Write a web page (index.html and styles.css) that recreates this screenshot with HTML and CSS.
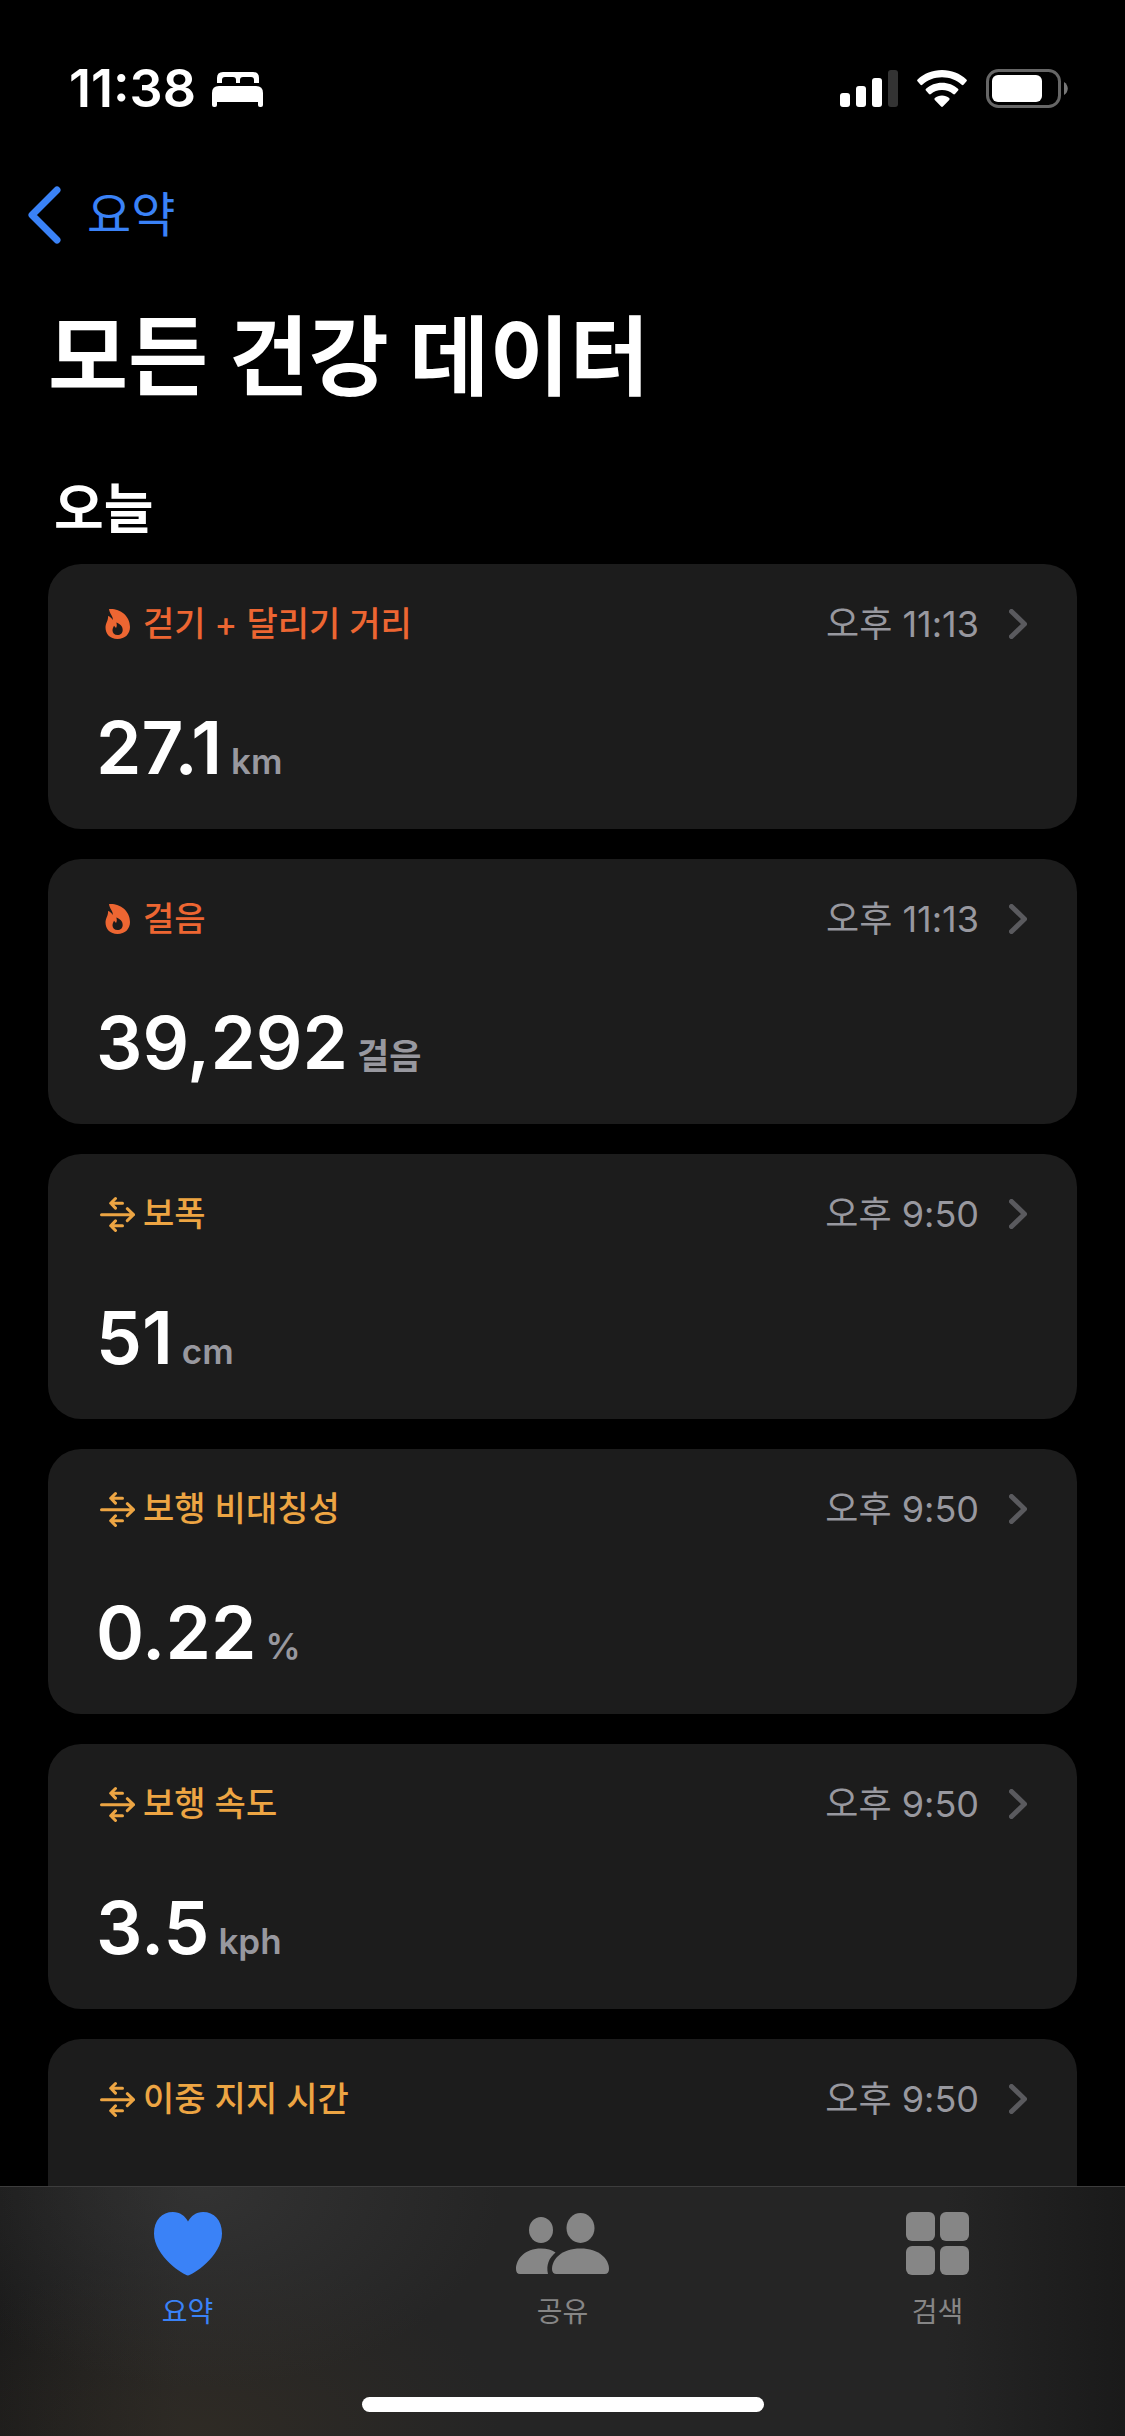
FILE: index.html
```
<!DOCTYPE html>
<html lang="ko">
<head>
    <meta charset="UTF-8">
    <meta name="viewport" content="width=device-width, initial-scale=1.0">
    <title>모든 건강 데이터</title>
    <link rel="stylesheet" href="styles.css">
</head>
<body>
    <!-- shared icons -->
    <svg class="sprite" aria-hidden="true">
        <symbol id="flame" viewBox="0 0 36 36">
            <path fill="currentColor" fill-rule="evenodd" d="M9 3C19 2 30 9 30 21C30 28 25 33 17.500 33C10 33 5.500 28 5.500 21.500C5.500 17 8.500 14.500 8 10C10 10.500 11.500 12 12.700 14C13.500 10.500 9.500 8 9 3ZM16.300 16.500C20 18 22.700 20 22.700 24C22.700 27 20.500 29 17.500 29C14.500 29 12.500 27 12.500 24.500C12.500 22.500 13.500 21 14 19.800L16 22C17 20.500 17 18.500 16.300 16.500Z"/>
        </symbol>
        <symbol id="mobility" viewBox="0 0 36 36">
            <path fill="none" stroke="currentColor" stroke-width="3" stroke-linecap="round" stroke-linejoin="round" d="M1.500 18.700H33.500M27.300 12.700L33.500 18.700L27.300 24.700M22.500 7.300H11M15.500 2.500L10.700 7.300L15.500 12.100M22.500 29.700H11M15.500 24.900L10.700 29.700L15.500 34.500"/>
        </symbol>
        <symbol id="chevron" viewBox="0 0 18 30">
            <path fill="none" stroke="currentColor" stroke-width="5" stroke-linecap="round" stroke-linejoin="round" d="M2.500 2.500L15.500 15L2.500 27.500"/>
        </symbol>
    </svg>

    <div class="app">
        <header class="status-bar">
            <div class="status-left">
                <span class="clock">11:38</span>
                <svg width="52" height="36" viewBox="0 0 52 36" fill="#fff">
                    <path d="M5 12V7Q5 1 11 1H41Q47 1 47 7V12H42V9Q42 6 39 6H31Q28 6 28 9V12H24V9Q24 6 21 6H13Q10 6 10 9V12Z"/>
                    <path d="M0 22Q0 15 7 15H44Q51 15 51 22V34Q51 36 49 36H48Q46 36 46 34V31H5V34Q5 36 3 36H2Q0 36 0 34Z"/>
                </svg>
            </div>
            <div class="status-right">
                <svg width="58" height="38" viewBox="0 0 58 38" fill="#fff">
                    <rect x="0" y="23" width="10" height="14" rx="3"/>
                    <rect x="16" y="16" width="10" height="21" rx="3"/>
                    <rect x="32" y="8" width="10" height="29" rx="3"/>
                    <rect x="48" y="0" width="10" height="37" rx="3" fill="#333"/>
                </svg>
                <svg width="50" height="38" viewBox="0 0 50 38" fill="#fff">
                    <path d="M25 0C15.500 0 7 3.500 .6 9.500Q-.3 10.400 .5 11.300L3.500 14.800Q4.400 15.700 5.300 14.800C10.500 10 17.500 7.300 25 7.300S39.500 10 44.700 14.800Q45.600 15.700 46.500 14.800L49.500 11.300Q50.300 10.400 49.400 9.500C43 3.500 34.500 0 25 0Z"/>
                    <path d="M25 12.700C18.800 12.700 13.200 15 9 18.700Q8 19.600 8.900 20.600L12 24Q12.900 24.900 13.900 24C16.800 21.500 20.700 20 25 20S33.200 21.500 36.100 24Q37.100 24.900 38 24L41.100 20.600Q42 19.600 41 18.700C36.800 15 31.200 12.700 25 12.700Z"/>
                    <path d="M25 25.500C22.200 25.500 19.700 26.500 17.800 28.100Q16.900 29 17.800 29.900L24.100 36.500Q25 37.400 25.900 36.500L32.200 29.900Q33.100 29 32.200 28.100C30.300 26.500 27.800 25.500 25 25.500Z"/>
                </svg>
                <svg width="82" height="40" viewBox="0 0 82 40">
                    <rect x="1.500" y="1.500" width="72" height="36" rx="11" fill="none" stroke="#666" stroke-width="3"/>
                    <rect x="6" y="6" width="50" height="27" rx="6" fill="#fff"/>
                    <path d="M78 13C83 16 83 23 78 26Z" fill="#777"/>
                </svg>
            </div>
        </header>

        <nav class="nav-bar">
            <a href="#" class="back">
                <svg width="34" height="58" viewBox="0 0 34 58">
                    <path fill="none" stroke="currentColor" stroke-width="7" stroke-linecap="round" stroke-linejoin="round" d="M29 4L4 29L29 54"/>
                </svg>
                <span>요약</span>
            </a>
        </nav>

        <main class="content">
            <h1>모든 건강 데이터</h1>
            <h2>오늘</h2>

            <div class="cards">
                <a href="#" class="card activity">
                    <div class="card-head">
                        <svg class="icon"><use href="#flame"/></svg>
                        <h3>걷기 + 달리기 거리</h3>
                        <time>오후 11:13</time>
                        <svg class="arrow"><use href="#chevron"/></svg>
                    </div>
                    <div class="value"><strong>27.1</strong><span>km</span></div>
                </a>
                <a href="#" class="card activity">
                    <div class="card-head">
                        <svg class="icon"><use href="#flame"/></svg>
                        <h3>걸음</h3>
                        <time>오후 11:13</time>
                        <svg class="arrow"><use href="#chevron"/></svg>
                    </div>
                    <div class="value"><strong>39,292</strong><span>걸음</span></div>
                </a>
                <a href="#" class="card mobility">
                    <div class="card-head">
                        <svg class="icon"><use href="#mobility"/></svg>
                        <h3>보폭</h3>
                        <time>오후 9:50</time>
                        <svg class="arrow"><use href="#chevron"/></svg>
                    </div>
                    <div class="value"><strong>51</strong><span>cm</span></div>
                </a>
                <a href="#" class="card mobility">
                    <div class="card-head">
                        <svg class="icon"><use href="#mobility"/></svg>
                        <h3>보행 비대칭성</h3>
                        <time>오후 9:50</time>
                        <svg class="arrow"><use href="#chevron"/></svg>
                    </div>
                    <div class="value"><strong>0.22</strong><span>%</span></div>
                </a>
                <a href="#" class="card mobility">
                    <div class="card-head">
                        <svg class="icon"><use href="#mobility"/></svg>
                        <h3>보행 속도</h3>
                        <time>오후 9:50</time>
                        <svg class="arrow"><use href="#chevron"/></svg>
                    </div>
                    <div class="value"><strong>3.5</strong><span>kph</span></div>
                </a>
                <a href="#" class="card mobility">
                    <div class="card-head">
                        <svg class="icon"><use href="#mobility"/></svg>
                        <h3>이중 지지 시간</h3>
                        <time>오후 9:50</time>
                        <svg class="arrow"><use href="#chevron"/></svg>
                    </div>
                </a>
            </div>
        </main>

        <footer class="tab-bar">
            <nav class="tabs">
                <a href="#" class="tab active">
                    <svg width="68" height="64" viewBox="0 0 68 64" fill="currentColor">
                        <path d="M34 63.500C30 63.500 0 44 0 21.500C0 8 8 0 19 0C26 0 31 4 34 9.500C37 4 42 0 49 0C60 0 68 8 68 21.500C68 44 38 63.500 34 63.500Z"/>
                    </svg>
                    <span>요약</span>
                </a>
                <a href="#" class="tab">
                    <svg width="94" height="64" viewBox="0 0 94 64" fill="currentColor">
                        <ellipse cx="25" cy="18" rx="12" ry="13"/>
                        <ellipse cx="64.500" cy="16" rx="14" ry="15"/>
                        <path d="M4 62Q0 62 0 57C0 47 9 36.500 25 36.500C31 36.500 36 38 39.500 40.500C33 46 30 53 32 62Z"/>
                        <path d="M40.500 62Q36 62 36 57C36 47 46 36.500 64.500 36.500S93 47 93 57Q93 62 88.500 62Z"/>
                    </svg>
                    <span>공유</span>
                </a>
                <a href="#" class="tab">
                    <svg width="64" height="64" viewBox="0 0 64 64" fill="currentColor">
                        <rect x="0" y="0" width="29" height="29" rx="6"/>
                        <rect x="34" y="0" width="29" height="29" rx="6"/>
                        <rect x="0" y="34" width="29" height="29" rx="6"/>
                        <rect x="34" y="34" width="29" height="29" rx="6"/>
                    </svg>
                    <span>검색</span>
                </a>
            </nav>
            <div class="home-indicator"></div>
        </footer>
    </div>
</body>
</html>
```
FILE: styles.css
```
* {
    box-sizing: border-box;
}
body {
    margin: 0;
    background-color: #000;
    color: #fff;
    font-family: Inter, "Noto Sans CJK KR", sans-serif;
}
a {
    color: inherit;
    text-decoration: none;
}
h1, h2, h3 {
    margin: 0;
}
svg {
    display: block;
    flex-shrink: 0;
}
.sprite {
    position: absolute;
    width: 0;
    height: 0;
}
.app {
    display: flex;
    flex-direction: column;
    height: 100vh;
}

/* status bar */
.status-bar {
    display: flex;
    justify-content: space-between;
    align-items: center;
    height: 60px;
    margin-top: 59px;
    padding: 0 57px 0 69px;
    flex-shrink: 0;
}
.status-left,
.status-right {
    display: flex;
    align-items: center;
}
.status-left {
    gap: 16px;
}
.status-right {
    gap: 19px;
}
.clock {
    font-size: 52px;
    font-weight: 600;
    line-height: 60px;
}

.nav-bar {
    display: flex;
    margin-top: 66px;
    padding: 0 28px;
    flex-shrink: 0;
}
.back {
    display: flex;
    align-items: center;
    gap: 25px;
    height: 60px;
    color: #3a82f7;
    font-size: 48px;
    line-height: 60px;
}

/* list */
.content {
    flex: 1;
    min-height: 0;
    overflow-y: auto;
    padding: 63px 48px 0;
    scrollbar-width: none;
}
h1 {
    font-size: 87px;
    font-weight: 700;
    line-height: 100px;
}
h2 {
    margin-top: 72px;
    padding-left: 6px;
    font-size: 54px;
    font-weight: 700;
    line-height: 60px;
}
.cards {
    display: flex;
    flex-direction: column;
    gap: 30px;
    margin-top: 24px;
    padding-bottom: 30px;
}
.card {
    display: block;
    min-height: 265px;
    padding: 42px 50px 41px 48px;
    border-radius: 33px;
    background-color: #1c1c1c;
}
.card-head {
    display: flex;
    align-items: center;
    height: 36px;
    padding-left: 4px;
}
.icon {
    width: 36px;
    height: 36px;
    margin-right: 7px;
}
.card h3 {
    flex: 1;
    font-size: 34px;
    font-weight: 500;
    line-height: 36px;
}
.card time {
    color: #98989f;
    font-size: 36px;
    line-height: 36px;
}
.arrow {
    width: 18px;
    height: 30px;
    margin-left: 30px;
    color: #5a5a5e;
}
.activity h3,
.activity .icon {
    color: #ed6632;
}
.mobility h3,
.mobility .icon {
    color: #eda543;
}
.value {
    display: flex;
    align-items: baseline;
    gap: 9px;
    height: 80px;
    margin-top: 66px;
}
.value strong {
    font-size: 73px;
    font-weight: 600;
    line-height: 80px;
}
.value span {
    color: #98989f;
    font-size: 35px;
    font-weight: 600;
    line-height: 40px;
}

/* bottom tabs */
.tab-bar {
    display: flex;
    flex-direction: column;
    flex-shrink: 0;
    height: 250px;
    border-top: 1px solid #3d3d3d;
    background:
        radial-gradient(ellipse 300px 200px at 18% 0, rgba(64, 64, 64, 0.5), transparent),
        radial-gradient(ellipse 300px 180px at 18% 100%, rgba(56, 48, 36, 0.5), transparent),
        linear-gradient(90deg, #1a1a1a, #252525 16%, #252525 84%, #1a1a1a);
}
.tabs {
    display: grid;
    grid-template-columns: repeat(3, 1fr);
    padding-top: 25px;
}
.tab {
    display: flex;
    flex-direction: column;
    align-items: center;
    gap: 16px;
    color: #868686;
    font-size: 28px;
    line-height: 40px;
}
.tab.active {
    color: #3a82f7;
}
.home-indicator {
    width: 402px;
    height: 15px;
    margin: auto auto 24px;
    border-radius: 8px;
    background-color: #fff;
}
```
